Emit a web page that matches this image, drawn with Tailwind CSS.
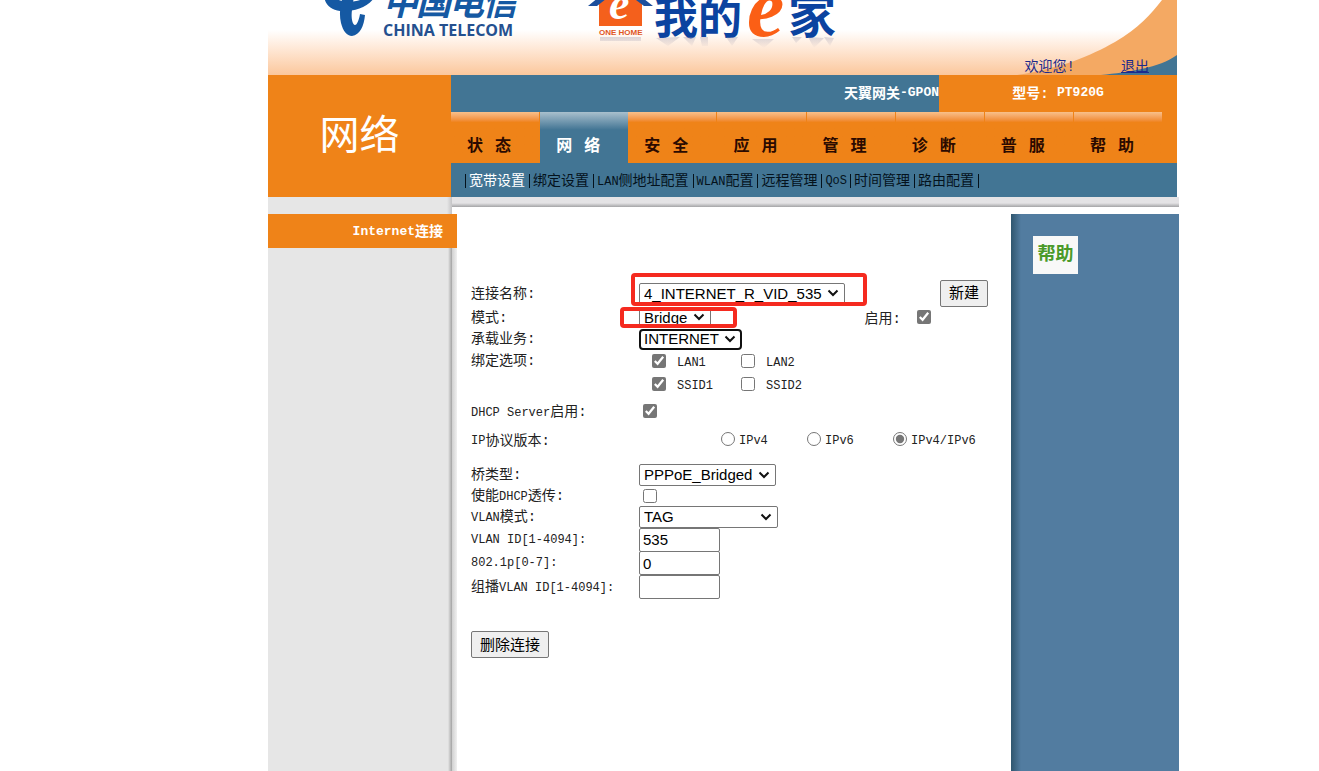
<!DOCTYPE html>
<html lang="zh-CN">
<head>
<meta charset="utf-8">
<title>天翼网关-GPON</title>
<script src="https://cdn.jsdelivr.net/npm/@tailwindcss/browser@4"></script>
</head>
<body class="min-h-screen bg-white font-['Liberation_Mono','Noto_Sans_CJK_SC',monospace] text-sm text-[#222]">
<svg class="hidden" aria-hidden="true"><symbol id="chev" viewBox="0 0 12 8"><path d="M1.5 1.5L6 6L10.500 1.500" fill="none" stroke="#111" stroke-width="2"/></symbol></svg>
<div class="flex min-h-screen flex-col pl-[268px] pr-[140px]">

  <header class="relative mr-0.5 h-[75px] overflow-hidden bg-linear-to-b from-white from-40% to-[#fbc79c]">
    <svg class="absolute left-0 top-0" width="600" height="75" viewBox="0 0 600 75" role="img" aria-label="China Telecom 我的e家">
      <defs>
        <linearGradient id="shade" x1="0" y1="0" x2="0" y2="1">
          <stop offset="0" stop-color="#9a93a8" stop-opacity=".35"/>
          <stop offset="1" stop-color="#9a93a8" stop-opacity="0"/>
        </linearGradient>
      </defs>
      <g fill="#1559a3">
        <path d="M56 -4C57 5 63 10 72 11C84 12 99 8 106 -2L98 -3C93 1 82 3 74 1C70 0 68 -1 67 -4Z"/>
        <path d="M75 -4C72 6 71 15 73 23C75 31 79 36 84 36C92 35 96 26 97 15L92 14C91 20 89 25 87 25C84 24 83 17 84 10L86 -4Z"/>
        <text x="115 148 181 214" y="15" font-family="Noto Sans CJK SC" font-size="35" font-weight="700" font-style="italic">中国电信</text>
        <text x="115" y="36" font-family="Open Sans" font-size="16" font-weight="700" fill="#24508f">CHINA TELECOM</text>
      </g>
      <path d="M331 -10H374V26H331Z" fill="#f4601c"/>
      <path d="M320 6L352 -20L385 6H376L352 -12L329 6Z" fill="#1d4f9c"/>
      <text x="341" y="19" font-family="Liberation Serif" font-size="46" font-weight="700" font-style="italic" fill="#fff">e</text>
      <text x="331" y="35" font-family="Liberation Sans" font-size="8" font-weight="700" fill="#e0561f">ONE HOME</text>
      <text x="386 430" y="34" font-family="Noto Sans CJK SC" font-size="44" font-weight="700" fill="#0b43a0">我的</text>
      <text x="479" y="36" font-family="Liberation Serif" font-size="84" font-weight="700" font-style="italic" fill="#fb5f15">e</text>
      <text x="520" y="33" font-family="Noto Sans CJK SC" font-size="48" font-weight="700" fill="#0b43a0">家</text>
      <path d="M332 37H373V41H332ZM388 38L412 37L400 46ZM415 37L428 37L424 46ZM432 37H440V46H434ZM458 37H470L464 46ZM484 39H506L496 48ZM524 37L534 37L528 43ZM540 37L556 38L546 48ZM556 37L566 38L562 46Z" fill="url(#shade)"/>
    </svg>
    <svg class="absolute right-0 top-0" width="160" height="75" viewBox="0 0 160 75" aria-hidden="true">
      <path d="M0 75C45 68 73 56 98 42C122 28 134 14 145 0H160V75Z" fill="#f4a963"/>
      <path d="M84 75C112 72 142 68 160 55V75Z" fill="#427594"/>
    </svg>
    <div class="absolute bottom-0 right-7 flex gap-[46px] text-sm leading-4 text-[#1c2a8c]">
      <span>欢迎您!</span>
      <a href="#" class="underline">退出</a>
    </div>
  </header>

  <div class="mr-0.5 flex h-[122px]">
    <h1 class="flex w-[183px] shrink-0 items-center justify-center bg-[#ef8318] pt-1.5 text-[40px] text-white">网络</h1>
    <div class="flex min-w-0 flex-1 flex-col">
      <div class="flex h-[37px] items-center font-bold text-white">
        <div class="flex h-full flex-1 items-center justify-end bg-[#427594]">天翼网关<span class="text-[13px]">-GPON</span></div>
        <div class="flex h-full w-[238px] items-center justify-center bg-[#ef8318]">型号:&nbsp;<span class="text-[13px]">PT920G</span></div>
      </div>
      <nav class="flex h-[51px] bg-[#ef8318] pr-[15px] text-base font-bold text-[#2b0a00]">
        <a href="#" class="flex flex-1 items-end border-r border-[#ef8318] bg-linear-to-b from-[#f8c08a] to-[#ef8318] to-20% pb-1 pl-4">状<span class="text-xl/6">&nbsp;</span>态</a>
        <a href="#" class="flex flex-1 items-end bg-linear-to-b from-[#a9c0cd] to-[#427594] to-35% pb-1 pl-4 text-white">网<span class="text-xl/6">&nbsp;</span>络</a>
        <a href="#" class="flex flex-1 items-end border-r border-[#ef8318] bg-linear-to-b from-[#f8c08a] to-[#ef8318] to-20% pb-1 pl-4">安<span class="text-xl/6">&nbsp;</span>全</a>
        <a href="#" class="flex flex-1 items-end border-r border-[#ef8318] bg-linear-to-b from-[#f8c08a] to-[#ef8318] to-20% pb-1 pl-4">应<span class="text-xl/6">&nbsp;</span>用</a>
        <a href="#" class="flex flex-1 items-end border-r border-[#ef8318] bg-linear-to-b from-[#f8c08a] to-[#ef8318] to-20% pb-1 pl-4">管<span class="text-xl/6">&nbsp;</span>理</a>
        <a href="#" class="flex flex-1 items-end border-r border-[#ef8318] bg-linear-to-b from-[#f8c08a] to-[#ef8318] to-20% pb-1 pl-4">诊<span class="text-xl/6">&nbsp;</span>断</a>
        <a href="#" class="flex flex-1 items-end border-r border-[#ef8318] bg-linear-to-b from-[#f8c08a] to-[#ef8318] to-20% pb-1 pl-4">普<span class="text-xl/6">&nbsp;</span>服</a>
        <a href="#" class="flex flex-1 items-end bg-linear-to-b from-[#f8c08a] to-[#ef8318] to-20% pb-1 pl-4">帮<span class="text-xl/6">&nbsp;</span>助</a>
      </nav>
      <nav class="flex h-[34px] items-center gap-[3px] bg-[#427594] pl-3.5 pt-0.5 text-[#04121c]">
        <i class="h-3.5 w-px bg-[#04121c]"></i><a href="#" class="mr-px text-white">宽带设置</a>
        <i class="h-3.5 w-px bg-[#04121c]"></i><a href="#" class="mr-px">绑定设置</a>
        <i class="h-3.5 w-px bg-[#04121c]"></i><a href="#" class="mr-px"><span class="text-xs">LAN</span>侧地址配置</a>
        <i class="h-3.5 w-px bg-[#04121c]"></i><a href="#" class="mr-px"><span class="text-xs">WLAN</span>配置</a>
        <i class="h-3.5 w-px bg-[#04121c]"></i><a href="#" class="mr-px">远程管理</a>
        <i class="h-3.5 w-px bg-[#04121c]"></i><a href="#" class="text-xs">QoS</a>
        <i class="h-3.5 w-px bg-[#04121c]"></i><a href="#" class="mr-px">时间管理</a>
        <i class="h-3.5 w-px bg-[#04121c]"></i><a href="#" class="mr-px">路由配置</a>
        <i class="h-3.5 w-px bg-[#04121c]"></i>
      </nav>
    </div>
  </div>

  <div class="flex flex-1">
    <aside class="flex w-[189px] shrink-0 flex-col bg-[#e6e6e6]">
      <div class="flex h-[17px]">
        <div class="flex-1"></div><div class="w-[5px] bg-linear-to-r from-[#e6e6e6] to-[#c4c4c6]"></div><div class="w-[5px] bg-white"></div>
      </div>
      <a href="#" class="flex h-[34px] items-center justify-end bg-[#ef8318] pr-3.5 pt-0.5 font-bold text-white"><span class="text-[13px]">Internet</span>连接</a>
      <div class="flex flex-1">
        <div class="flex-1"></div><div class="w-1 bg-linear-to-r from-[#e6e6e6] to-[#a2a2a2]"></div><div class="w-[5px] bg-linear-to-r from-[#d0d0d0] to-[#f0f0f0]"></div>
      </div>
    </aside>

    <div class="flex min-w-0 flex-1 flex-col">
      <div class="-ml-[5px] h-[10px] bg-linear-to-b from-[#e4e3e5] from-60% to-[#a5a5a7]"></div>
      <div class="mt-[7px] flex flex-1">
        <main class="min-w-0 flex-1 pl-3.5 pt-[67px]">
          <form>
            <div class="flex h-6 items-center">
              <label for="conn" class="w-[168px] pt-0.5">连接名称:</label>
              <div class="relative">
                <select id="conn" class="block h-[21px] w-[206px] appearance-none rounded-xs border border-[#767676] bg-white pl-1 font-['Liberation_Sans'] text-[15px]/5 text-black"><option>4_INTERNET_R_VID_535</option></select>
                <svg class="pointer-events-none absolute right-1.5 top-1.5 h-2 w-3"><use href="#chev"/></svg>
                <div class="pointer-events-none absolute -left-2 -top-2.5 h-[33px] w-[236px] rounded-sm border-4 border-[#f52a1f]"></div>
              </div>
              <button type="button" class="ml-auto mr-[23px] h-[27px] w-12 rounded-xs border border-[#767676] bg-[#efefef] pt-1 text-[15px]/5 text-black">新建</button>
            </div>
            <div class="flex h-6 items-center">
              <label for="mode" class="w-[168px] pt-0.5">模式:</label>
              <div class="relative">
                <select id="mode" class="block h-5 w-[72px] appearance-none rounded-xs border border-[#767676] bg-white pl-1 font-['Liberation_Sans'] text-[15px]/5 text-black"><option>Bridge</option></select>
                <svg class="pointer-events-none absolute right-1.5 top-1.5 h-2 w-3"><use href="#chev"/></svg>
                <div class="pointer-events-none absolute -left-[19px] top-0 h-[21px] w-[117px] rounded-sm border-4 border-[#f52a1f]"></div>
              </div>
              <label class="ml-auto mr-20 flex items-center gap-4"><span class="pt-1">启用:</span><input type="checkbox" checked class="size-3.5 accent-[#767676]"></label>
            </div>
            <div class="flex h-5 items-center">
              <label for="svc" class="w-[168px]">承载业务:</label>
              <div class="relative">
                <select id="svc" class="block h-[21px] w-[103px] appearance-none rounded-sm border-2 border-[#101010] bg-white pl-[3px] font-['Liberation_Sans'] text-[15px]/4 text-black"><option>INTERNET</option></select>
                <svg class="pointer-events-none absolute right-1.5 top-1.5 h-2 w-3"><use href="#chev"/></svg>
              </div>
            </div>
            <fieldset class="flex">
              <legend class="float-left flex h-6 w-[168px] items-center">绑定选项:</legend>
              <div class="grid grid-cols-[89px_89px] pl-[13px] text-xs">
                <label class="flex h-[23px] items-center gap-[11px]"><input type="checkbox" checked class="size-3.5 accent-[#767676]"><span class="pt-1">LAN1</span></label>
                <label class="flex h-[23px] items-center gap-[11px]"><input type="checkbox" class="size-3.5 accent-[#767676]"><span class="pt-1">LAN2</span></label>
                <label class="flex h-[23px] items-center gap-[11px]"><input type="checkbox" checked class="size-3.5 accent-[#767676]"><span class="pt-1">SSID1</span></label>
                <label class="flex h-[23px] items-center gap-[11px]"><input type="checkbox" class="size-3.5 accent-[#767676]"><span class="pt-1">SSID2</span></label>
              </div>
            </fieldset>
            <div class="flex h-8 items-center">
              <label for="dhcp" class="w-[168px] pt-0.5"><span class="text-xs">DHCP Server</span>启用:</label>
              <input id="dhcp" type="checkbox" checked class="ml-1 size-3.5 accent-[#767676]">
            </div>
            <fieldset class="mb-3.5 flex">
              <legend class="float-left flex h-[23px] w-[168px] items-center pt-1"><span class="text-xs">IP</span>协议版本:</legend>
              <div class="grid h-[23px] grid-cols-[86px_86px_auto] pl-[82px] text-xs">
                <label class="flex items-center gap-1"><input type="radio" name="ip" class="size-3.5 accent-[#767676]"><span class="pt-1">IPv4</span></label>
                <label class="flex items-center gap-1"><input type="radio" name="ip" class="size-3.5 accent-[#767676]"><span class="pt-1">IPv6</span></label>
                <label class="flex items-center gap-1"><input type="radio" name="ip" checked class="size-3.5 accent-[#767676]"><span class="pt-1">IPv4/IPv6</span></label>
              </div>
            </fieldset>
            <div class="flex h-[22px] items-center">
              <label for="bridge" class="w-[168px]">桥类型:</label>
              <div class="relative">
                <select id="bridge" class="block h-[22px] w-[137px] appearance-none rounded-xs border border-[#767676] bg-white pl-1 font-['Liberation_Sans'] text-[15px]/5 text-black"><option>PPPoE_Bridged</option></select>
                <svg class="pointer-events-none absolute right-1.5 top-[7px] h-2 w-3"><use href="#chev"/></svg>
              </div>
            </div>
            <div class="flex h-5 items-center">
              <label for="pass" class="w-[168px]">使能<span class="text-xs">DHCP</span>透传:</label>
              <input id="pass" type="checkbox" class="ml-1 size-3.5 accent-[#767676]">
            </div>
            <div class="flex h-[22px] items-center">
              <label for="vmode" class="w-[168px]"><span class="text-xs">VLAN</span>模式:</label>
              <div class="relative">
                <select id="vmode" class="block h-[22px] w-[139px] appearance-none rounded-xs border border-[#767676] bg-white pl-1 font-['Liberation_Sans'] text-[15px]/5 text-black"><option>TAG</option></select>
                <svg class="pointer-events-none absolute right-1.5 top-[7px] h-2 w-3"><use href="#chev"/></svg>
              </div>
            </div>
            <div class="flex h-[23px] items-center">
              <label for="vid" class="w-[168px] text-xs">VLAN ID[1-4094]:</label>
              <input id="vid" type="text" value="535" class="h-6 w-[81px] rounded-xs border border-[#767676] px-[3px] font-['Liberation_Sans'] text-[15px] text-black">
            </div>
            <div class="flex h-6 items-center">
              <label for="prio" class="w-[168px] text-xs">802.1p[0-7]:</label>
              <input id="prio" type="text" value="0" class="h-6 w-[81px] rounded-xs border border-[#767676] px-[3px] font-['Liberation_Sans'] text-[15px] text-black">
            </div>
            <div class="flex h-6 items-center">
              <label for="mvid" class="w-[168px]">组播<span class="text-xs">VLAN ID[1-4094]:</span></label>
              <input id="mvid" type="text" class="h-6 w-[81px] rounded-xs border border-[#767676] px-[3px] font-['Liberation_Sans'] text-[15px] text-black">
            </div>
            <button type="button" class="mt-8 h-[27px] w-[78px] rounded-xs border border-[#767676] bg-[#efefef] pt-1 text-[15px]/5 text-black">删除连接</button>
          </form>
        </main>
        <aside class="flex w-[168px] shrink-0 bg-[#527ca0]">
          <div class="w-2.5 bg-linear-to-r from-[#2f566f] to-[#527ca0]"></div>
          <a href="#" class="ml-3 mt-[22px] flex h-[38px] w-[45px] items-center justify-center bg-[#f8f8f8] text-lg font-bold text-[#4a9a2a]">帮助</a>
        </aside>
      </div>
    </div>
  </div>
</div>
</body>
</html>
